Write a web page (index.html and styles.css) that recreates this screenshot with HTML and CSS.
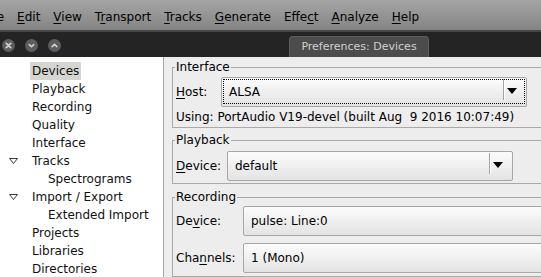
FILE: index.html
```html
<!DOCTYPE html>
<html>
<head>
<meta charset="utf-8">
<link rel="stylesheet" href="styles.css">
</head>
<body>
<div class="app">
  <nav class="menubar">
    <span class="mi first"><u>F</u>ile</span>
    <span class="mi"><u>E</u>dit</span>
    <span class="mi"><u>V</u>iew</span>
    <span class="mi">T<u>r</u>ansport</span>
    <span class="mi"><u>T</u>racks</span>
    <span class="mi"><u>G</u>enerate</span>
    <span class="mi">Effe<u>c</u>t</span>
    <span class="mi"><u>A</u>nalyze</span>
    <span class="mi"><u>H</u>elp</span>
  </nav>
  <div class="titlebar">
    <div class="wbtns">
      <svg class="wbtn" width="13" height="13" viewBox="0 0 13 13"><circle cx="6.5" cy="6.5" r="6.5" fill="#5d5d5d"/><path d="M4.3 4.3L8.7 8.7M8.7 4.3L4.3 8.7" stroke="#d2d2d2" stroke-width="1.7" stroke-linecap="round"/></svg>
      <svg class="wbtn" width="13" height="13" viewBox="0 0 13 13"><circle cx="6.5" cy="6.5" r="6.5" fill="#5d5d5d"/><path d="M4.2 5.5L6.5 7.8L8.8 5.5" fill="none" stroke="#d2d2d2" stroke-width="1.6" stroke-linecap="round" stroke-linejoin="round"/></svg>
      <svg class="wbtn" width="13" height="13" viewBox="0 0 13 13"><circle cx="6.5" cy="6.5" r="6.5" fill="#5d5d5d"/><path d="M4.2 7.6L6.5 5.3L8.8 7.6" fill="none" stroke="#d2d2d2" stroke-width="1.6" stroke-linecap="round" stroke-linejoin="round"/></svg>
    </div>
    <div class="tab">Preferences: Devices</div>
  </div>
  <div class="main">
    <ul class="tree">
      <li class="row sel"><span class="exp"></span><span class="lbl">Devices</span></li>
      <li class="row"><span class="exp"></span><span class="lbl">Playback</span></li>
      <li class="row"><span class="exp"></span><span class="lbl">Recording</span></li>
      <li class="row"><span class="exp"></span><span class="lbl">Quality</span></li>
      <li class="row"><span class="exp"></span><span class="lbl">Interface</span></li>
      <li class="row"><span class="exp"><svg width="9" height="6" viewBox="0 0 9 6"><path d="M0.5 0.5H8.5L4.5 5.5Z" fill="#fff" stroke="#3a3a3a"/></svg></span><span class="lbl">Tracks</span></li>
      <li class="row child"><span class="exp"></span><span class="lbl">Spectrograms</span></li>
      <li class="row"><span class="exp"><svg width="9" height="6" viewBox="0 0 9 6"><path d="M0.5 0.5H8.5L4.5 5.5Z" fill="#fff" stroke="#3a3a3a"/></svg></span><span class="lbl">Import / Export</span></li>
      <li class="row child"><span class="exp"></span><span class="lbl">Extended Import</span></li>
      <li class="row"><span class="exp"></span><span class="lbl">Projects</span></li>
      <li class="row"><span class="exp"></span><span class="lbl">Libraries</span></li>
      <li class="row"><span class="exp"></span><span class="lbl">Directories</span></li>
    </ul>
    <div class="pane">
      <fieldset class="frame f-int">
        <legend>Interface</legend>
        <div class="grid">
          <label><u>H</u>ost:</label>
          <div class="combo focus"><span class="val">ALSA</span><span class="sep"></span><svg class="arr" width="10" height="6" viewBox="0 0 10 6"><path d="M0 0H10L5 6Z"/></svg></div>
        </div>
        <div class="using">Using: PortAudio V19-devel (built Aug  9 2016 10:07:49)</div>
      </fieldset>
      <fieldset class="frame f-play">
        <legend>Playback</legend>
        <div class="grid">
          <label><u>D</u>evice:</label>
          <div class="combo"><span class="val">default</span><span class="sep"></span><svg class="arr" width="10" height="6" viewBox="0 0 10 6"><path d="M0 0H10L5 6Z"/></svg></div>
        </div>
      </fieldset>
      <fieldset class="frame f-rec">
        <legend>Recording</legend>
        <div class="grid">
          <label>De<u>v</u>ice:</label>
          <div class="combo"><span class="val">pulse: Line:0</span><span class="sep"></span><svg class="arr" width="10" height="6" viewBox="0 0 10 6"><path d="M0 0H10L5 6Z"/></svg></div>
          <label>Cha<u>n</u>nels:</label>
          <div class="combo"><span class="val">1 (Mono)</span><span class="sep"></span><svg class="arr" width="10" height="6" viewBox="0 0 10 6"><path d="M0 0H10L5 6Z"/></svg></div>
        </div>
      </fieldset>
    </div>
  </div>
</div>
</body>
</html>
```
FILE: styles.css
```css
* { box-sizing: border-box; }
html, body { margin: 0; padding: 0; }
body {
  width: 541px;
  height: 277px;
  overflow: hidden;
  font-family: "DejaVu Sans", "Noto Sans", sans-serif;
  font-size: 12px;
  color: #000;
  background: #ededed;
}
u { text-decoration-thickness: 1px; text-underline-offset: 2px; }
.app { display: flex; flex-direction: column; height: 277px; }

.menubar {
  flex: none;
  height: 32px;
  display: flex;
  gap: 13px;
  padding-top: 10px;
  line-height: 14px;
  white-space: nowrap;
  background: linear-gradient(#a5a5a5, #848484);
  border-bottom: 2px solid #464646;
  color: #000;
}
.menubar .first { margin-left: -16px; }

.titlebar {
  flex: none;
  height: 25px;
  display: flex;
  align-items: flex-end;
  background: #242424;
}
.wbtns {
  display: flex;
  gap: 10px;
  padding-left: 2px;
  align-self: center;
  margin-top: 2px;
}
.wbtn { display: block; }
.tab {
  margin-left: 228px;
  width: 140px;
  height: 21px;
  background: #4c4c4c;
  border: 1px solid #5e5e5e;
  border-bottom: none;
  border-radius: 4px 4px 0 0;
  color: #d0d0d0;
  font-size: 11px;
  line-height: 20px;
  text-align: center;
}

.main { flex: 1; display: flex; min-height: 0; }
.tree {
  flex: none;
  width: 164px;
  margin: 0;
  padding: 5px 0 0;
  list-style: none;
  background: #fff;
  border-right: 1px solid #a4a4a4;
  color: #111;
}
.row { display: flex; align-items: center; height: 18px; }
.exp {
  flex: none;
  width: 30px;
  padding-left: 9px;
  display: flex;
  align-items: center;
}
.exp svg { display: block; }
.child .exp { width: 46px; }
.lbl { padding: 0 2px; line-height: 18px; white-space: nowrap; }
.sel .lbl { background: #d6d6d0; }

.pane {
  flex: 1;
  min-width: 0;
  overflow: hidden;
  padding: 3px 0 0 8px;
}
.frame {
  width: 420px;
  margin: 0;
  padding: 0 0 3px 3px;
  border: 1px solid #aaa9a5;
}
.frame legend {
  margin-left: -1px;
  padding: 0 1px;
  line-height: 14px;
}
.grid { display: grid; align-items: center; }
label { line-height: 14px; white-space: nowrap; }

.f-int .grid { grid-template-columns: 45px 306px; padding-top: 3px; }
.using { margin-top: 3px; line-height: 14px; white-space: pre; }

.f-play { margin-top: 5px; padding-bottom: 2px; }
.f-play .grid { grid-template-columns: 51px 286px; padding-top: 4px; }

.f-rec { margin-top: 6px; }
.f-rec .grid { grid-template-columns: 67px 330px; padding-top: 2px; row-gap: 7px; }

.combo {
  position: relative;
  height: 30px;
  display: flex;
  align-items: center;
  padding: 0 9px 0 7px;
  border: 1px solid #a6a6a6;
  border-radius: 2px;
  background: linear-gradient(#fcfcfc, #e3e3e3);
  line-height: 14px;
  white-space: nowrap;
}
.val { flex: 1; }
.sep {
  align-self: flex-start;
  margin-top: 1px;
  margin-right: 2px;
  width: 2px;
  height: 21px;
  border-left: 1px solid #a3a3a3;
  border-right: 1px solid #ffffff;
}
.arr { display: block; margin-bottom: 2px; fill: #000; }
.focus::after {
  content: "";
  position: absolute;
  left: 1px;
  right: 1px;
  top: 1px;
  bottom: 2px;
  border: 1px dotted #000;
  pointer-events: none;
}
```
